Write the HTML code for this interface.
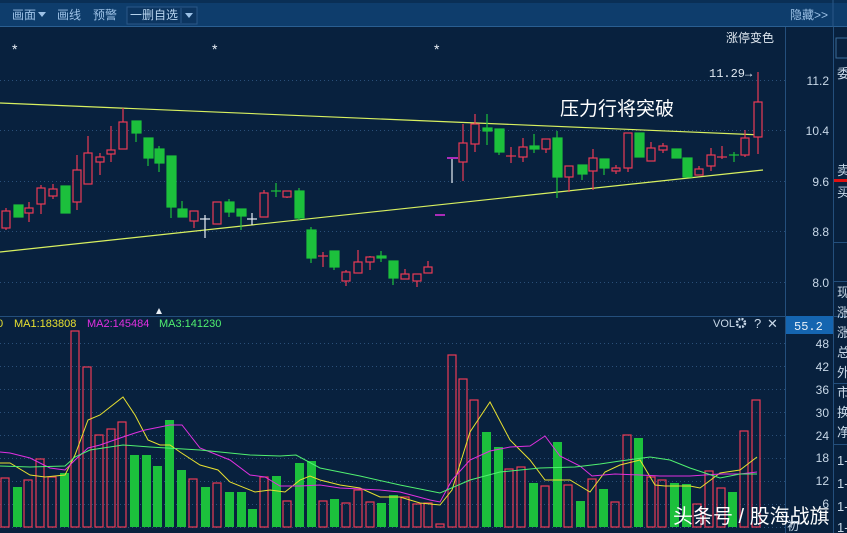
<!DOCTYPE html>
<html><head><meta charset="utf-8"><style>
html,body{margin:0;padding:0;background:#061d38;width:847px;height:533px;overflow:hidden}
svg{display:block}
text{font-family:"Liberation Sans","Noto Sans CJK SC",sans-serif}
text.m{font-family:"Liberation Mono","DejaVu Sans Mono",monospace}
</style></head><body>
<svg width="847" height="533" viewBox="0 0 847 533" xmlns="http://www.w3.org/2000/svg">
<rect width="847" height="533" fill="#08213e"/>
<rect x="0" y="0" width="847" height="27" fill="#0e3d6c"/>
<rect x="0" y="0" width="847" height="3" fill="#0a2f55"/>
<rect x="0" y="26" width="847" height="1" fill="#2a5f92"/>
<g font-size="12" fill="#9cc1e6">
<text x="12" y="19">画面</text><path d="M38 12 l8 0 l-4 5z" fill="#9cc1e6"/>
<text x="57" y="19">画线</text><text x="93" y="19">预警</text>
<rect x="127" y="7" width="70" height="17" fill="#0c3560" stroke="#2a5888"/>
<text x="130" y="19" fill="#b8d4ee">一删自选</text>
<line x1="181" y1="8" x2="181" y2="23" stroke="#2a5888"/>
<path d="M185 13 l8 0 l-4 5z" fill="#9cc1e6"/>
<text x="790" y="19">隐藏&gt;&gt;</text>
</g>
<line x1="833" y1="0" x2="833" y2="27" stroke="#2a5888"/>
<line x1="785.5" y1="27" x2="785.5" y2="533" stroke="#244f7c"/>
<line x1="833.5" y1="27" x2="833.5" y2="533" stroke="#244f7c"/>
<line x1="0" y1="316.5" x2="847" y2="316.5" stroke="#244f7c"/>
<line x1="834" y1="281.5" x2="847" y2="281.5" stroke="#244f7c"/>
<rect x="836" y="38" width="14" height="20" fill="none" stroke="#3a6a98"/>
<rect x="834" y="179" width="13" height="3" fill="#e01010"/>
<g font-size="13" fill="#c8d8e8">
<text x="837" y="78">委</text><text x="837" y="175">卖</text><text x="837" y="197">买</text>
<text x="837" y="297">现</text><text x="837" y="317">涨</text><text x="837" y="337">涨</text><text x="837" y="357">总</text><text x="837" y="377">外</text><text x="837" y="397">市</text><text x="837" y="417">换</text><text x="837" y="437">净</text>
<text x="837" y="465">1-</text><text x="837" y="488">1-</text><text x="837" y="511">1-</text><text x="837" y="532">1-</text>
</g>
<line x1="834" y1="242.5" x2="847" y2="242.5" stroke="#244f7c"/>
<line x1="834" y1="383.5" x2="847" y2="383.5" stroke="#244f7c"/>
<line x1="834" y1="444.5" x2="847" y2="444.5" stroke="#244f7c"/>
<g stroke="#2a4f78" stroke-dasharray="1,3">
<line x1="0" y1="80.5" x2="785" y2="80.5"/><line x1="0" y1="130.5" x2="785" y2="130.5"/><line x1="0" y1="181.5" x2="785" y2="181.5"/><line x1="0" y1="231.5" x2="785" y2="231.5"/><line x1="0" y1="282.5" x2="785" y2="282.5"/>
<line x1="0" y1="343.5" x2="785" y2="343.5"/><line x1="0" y1="366.5" x2="785" y2="366.5"/><line x1="0" y1="389.5" x2="785" y2="389.5"/><line x1="0" y1="412.5" x2="785" y2="412.5"/><line x1="0" y1="435.5" x2="785" y2="435.5"/><line x1="0" y1="458.5" x2="785" y2="458.5"/><line x1="0" y1="481.5" x2="785" y2="481.5"/><line x1="0" y1="504.5" x2="785" y2="504.5"/><line x1="0" y1="527.5" x2="785" y2="527.5"/>
</g>
<g class="m" font-size="12" fill="#c8d8e8" text-anchor="end" font-family="Liberation Mono, monospace">
<text x="829" y="85">11.2</text><text x="829" y="135">10.4</text><text x="829" y="186">9.6</text><text x="829" y="236">8.8</text><text x="829" y="287">8.0</text>
<text x="829" y="348">48</text><text x="829" y="371">42</text><text x="829" y="394">36</text><text x="829" y="417">30</text><text x="829" y="440">24</text><text x="829" y="462">18</text><text x="829" y="485">12</text><text x="829" y="508">6</text>
</g>
<rect x="786" y="316" width="47" height="18" fill="#1565b0"/>
<text class="m" x="794" y="330" font-size="12" fill="#e8f0f8">55.2</text>
<g fill="#e8eef5" font-size="14"><text x="12" y="54">*</text><text x="212" y="54">*</text><text x="434" y="54">*</text></g>
<text x="726" y="42" font-size="12" fill="#e0e8f0">涨停变色</text>
<text class="m" x="709" y="77" font-size="12" fill="#e0e8f0">11.29→</text>
<text x="560" y="115" font-size="19" fill="#ffffff">压力行将突破</text>
<path d="M156 314 l3 -6 l3 6z" fill="#e8eef5"/>
<line x1="0" y1="103" x2="762" y2="135" stroke="#d8f060" stroke-width="1.2"/>
<line x1="0" y1="252" x2="763" y2="170" stroke="#d8f060" stroke-width="1.2"/>
<line x1="435" y1="215" x2="445" y2="215" stroke="#e030e0" stroke-width="1.5"/>
<line x1="447" y1="158" x2="458" y2="158" stroke="#e030e0" stroke-width="1.5"/>
<g stroke="#ea3a55" stroke-width="1.2" fill="#08213e">
<line x1="6" y1="208" x2="6" y2="230"/><rect x="2" y="211" width="8" height="17"/>
<line x1="29" y1="202" x2="29" y2="222"/><rect x="25" y="208" width="8" height="5"/>
<line x1="41" y1="185" x2="41" y2="214"/><rect x="37" y="188" width="8" height="16"/>
<line x1="53" y1="184" x2="53" y2="199"/><rect x="49" y="189" width="8" height="7"/>
<line x1="77" y1="155" x2="77" y2="210"/><rect x="73" y="170" width="8" height="32"/>
<line x1="88" y1="136" x2="88" y2="184"/><rect x="84" y="153" width="8" height="31"/>
<line x1="100" y1="153" x2="100" y2="175"/><rect x="96" y="157" width="8" height="5"/>
<line x1="111" y1="126" x2="111" y2="162"/><rect x="107" y="150" width="8" height="4"/>
<line x1="123" y1="108" x2="123" y2="149"/><rect x="119" y="122" width="8" height="27"/>
<line x1="194" y1="211" x2="194" y2="228"/><rect x="190" y="211" width="8" height="10"/>
<rect x="213" y="202" width="8" height="22"/>
<line x1="264" y1="190" x2="264" y2="217"/><rect x="260" y="193" width="8" height="24"/>
<line x1="287" y1="191" x2="287" y2="198"/><rect x="283" y="191" width="8" height="6"/>
<line x1="323" y1="252" x2="323" y2="267"/><line x1="318" y1="256" x2="328" y2="256"/>
<line x1="346" y1="270" x2="346" y2="286"/><rect x="342" y="272" width="8" height="9"/>
<line x1="358" y1="250" x2="358" y2="273"/><rect x="354" y="262" width="8" height="11"/>
<line x1="370" y1="256" x2="370" y2="270"/><rect x="366" y="257" width="8" height="5"/>
<line x1="405" y1="269" x2="405" y2="279"/><rect x="401" y="274" width="8" height="5"/>
<line x1="417" y1="274" x2="417" y2="287"/><rect x="413" y="274" width="8" height="7"/>
<line x1="428" y1="261" x2="428" y2="273"/><rect x="424" y="267" width="8" height="6"/>
<line x1="463" y1="124" x2="463" y2="181"/><rect x="459" y="143" width="8" height="19"/>
<line x1="475" y1="114" x2="475" y2="152"/><rect x="471" y="124" width="8" height="20"/>
<line x1="511" y1="147" x2="511" y2="163"/><line x1="506" y1="156" x2="516" y2="156"/>
<line x1="523" y1="138" x2="523" y2="162"/><rect x="519" y="147" width="8" height="10"/>
<line x1="546" y1="139" x2="546" y2="153"/><rect x="542" y="139" width="8" height="10"/>
<line x1="569" y1="166" x2="569" y2="192"/><rect x="565" y="166" width="8" height="11"/>
<line x1="593" y1="149" x2="593" y2="190"/><rect x="589" y="158" width="8" height="13"/>
<line x1="616" y1="165" x2="616" y2="174"/><rect x="612" y="168" width="8" height="3"/>
<line x1="628" y1="133" x2="628" y2="172"/><rect x="624" y="133" width="8" height="35"/>
<line x1="651" y1="142" x2="651" y2="161"/><rect x="647" y="148" width="8" height="13"/>
<line x1="663" y1="143" x2="663" y2="153"/><rect x="659" y="146" width="8" height="4"/>
<line x1="699" y1="166" x2="699" y2="175"/><rect x="695" y="169" width="8" height="6"/>
<line x1="711" y1="148" x2="711" y2="171"/><rect x="707" y="155" width="8" height="11"/>
<line x1="722" y1="146" x2="722" y2="159"/><line x1="717" y1="157" x2="727" y2="157"/>
<line x1="745" y1="130" x2="745" y2="157"/><rect x="741" y="138" width="8" height="17"/>
<line x1="758" y1="72" x2="758" y2="154"/><rect x="754" y="102" width="8" height="35"/>
</g>
<g stroke="#1cc03c" stroke-width="1.2" fill="#1cc03c">
<rect x="14" y="205" width="9" height="12"/>
<rect x="61" y="186" width="9" height="27"/>
<line x1="136" y1="121" x2="136" y2="142"/><rect x="132" y="121" width="9" height="12"/>
<line x1="148" y1="138" x2="148" y2="166"/><rect x="144" y="138" width="9" height="20"/>
<line x1="159" y1="146" x2="159" y2="172"/><rect x="155" y="149" width="9" height="14"/>
<line x1="171" y1="156" x2="171" y2="218"/><rect x="167" y="156" width="9" height="51"/>
<line x1="182" y1="201" x2="182" y2="217"/><rect x="178" y="209" width="9" height="8"/>
<line x1="229" y1="199" x2="229" y2="217"/><rect x="225" y="202" width="9" height="10"/>
<line x1="241" y1="209" x2="241" y2="230"/><rect x="237" y="209" width="9" height="7"/>
<line x1="276" y1="183" x2="276" y2="197"/><line x1="271" y1="191" x2="281" y2="191"/>
<line x1="299" y1="188" x2="299" y2="220"/><rect x="295" y="191" width="9" height="27"/>
<line x1="311" y1="227" x2="311" y2="263"/><rect x="307" y="230" width="9" height="28"/>
<line x1="334" y1="251" x2="334" y2="270"/><rect x="330" y="251" width="9" height="16"/>
<line x1="381" y1="251" x2="381" y2="262"/><rect x="377" y="256" width="9" height="2"/>
<line x1="393" y1="261" x2="393" y2="285"/><rect x="389" y="261" width="9" height="17"/>
<line x1="487" y1="114" x2="487" y2="145"/><rect x="483" y="128" width="9" height="3"/>
<line x1="499" y1="129" x2="499" y2="155"/><rect x="495" y="129" width="9" height="23"/>
<line x1="534" y1="134" x2="534" y2="153"/><rect x="530" y="146" width="9" height="3"/>
<line x1="557" y1="131" x2="557" y2="198"/><rect x="553" y="138" width="9" height="39"/>
<line x1="582" y1="165" x2="582" y2="180"/><rect x="578" y="165" width="9" height="9"/>
<line x1="604" y1="159" x2="604" y2="175"/><rect x="600" y="159" width="9" height="9"/>
<rect x="635" y="133" width="9" height="24"/>
<rect x="672" y="149" width="9" height="9"/>
<rect x="683" y="158" width="9" height="19"/>
<line x1="734" y1="152" x2="734" y2="162"/><line x1="729" y1="155" x2="739" y2="155"/>
</g>
<g stroke="#e8eef5" stroke-width="1.2">
<line x1="205" y1="215" x2="205" y2="238"/><line x1="200" y1="219" x2="210" y2="219"/>
<line x1="252" y1="213" x2="252" y2="225"/><line x1="247" y1="219" x2="257" y2="219"/>
<line x1="452" y1="159" x2="452" y2="183"/>
</g>
<g class="m" font-size="11" font-family="Liberation Mono, monospace">
<text x="-3" y="327" fill="#e8e030">0</text>
<text x="14" y="327" fill="#e8e030">MA1:183808</text>
<text x="87" y="327" fill="#e030e0">MA2:145484</text>
<text x="159" y="327" fill="#50f070">MA3:141230</text>
<text x="713" y="327" fill="#c8d8e8">VOL</text>
</g>
<text x="754" y="328" fill="#c8d8e8" font-size="13">?</text>
<text x="767" y="328" fill="#c8d8e8" font-size="13">✕</text>
<circle cx="741" cy="323" r="4" fill="none" stroke="#c8d8e8" stroke-width="2.5" stroke-dasharray="2,1.2"/>
<g stroke="#ea3a55" stroke-width="1.2" fill="none">
<rect x="1" y="478" width="8" height="49"/><rect x="24" y="480" width="8" height="47"/><rect x="36" y="459" width="8" height="68"/><rect x="48" y="477" width="8" height="50"/>
<rect x="71" y="331" width="8" height="196"/><rect x="83" y="367" width="8" height="160"/><rect x="95" y="435" width="8" height="92"/><rect x="107" y="429" width="8" height="98"/><rect x="118" y="422" width="8" height="105"/>
<rect x="189" y="479" width="8" height="48"/><rect x="213" y="483" width="8" height="44"/><rect x="260" y="477" width="8" height="50"/><rect x="283" y="501" width="8" height="26"/><rect x="319" y="501" width="8" height="26"/><rect x="342" y="503" width="8" height="24"/><rect x="354" y="490" width="8" height="37"/><rect x="366" y="502" width="8" height="25"/>
<rect x="401" y="497" width="8" height="30"/><rect x="413" y="504" width="8" height="23"/><rect x="424" y="503" width="8" height="24"/><rect x="436" y="524" width="8" height="3"/>
<rect x="448" y="355" width="8" height="172"/><rect x="459" y="379" width="8" height="148"/><rect x="470" y="400" width="8" height="127"/>
<rect x="505" y="469" width="8" height="58"/><rect x="517" y="467" width="8" height="60"/><rect x="541" y="486" width="8" height="41"/><rect x="564" y="485" width="8" height="42"/><rect x="588" y="479" width="8" height="48"/><rect x="611" y="502" width="8" height="25"/><rect x="623" y="435" width="8" height="92"/><rect x="647" y="477" width="8" height="50"/><rect x="658" y="480" width="8" height="47"/><rect x="693" y="504" width="8" height="23"/><rect x="705" y="471" width="8" height="56"/><rect x="717" y="488" width="8" height="39"/><rect x="740" y="431" width="8" height="96"/><rect x="752" y="400" width="8" height="127"/>
</g>
<g fill="#1cc03c">
<rect x="13" y="487" width="9" height="40"/><rect x="60" y="473" width="9" height="54"/>
<rect x="130" y="455" width="9" height="72"/><rect x="142" y="455" width="9" height="72"/><rect x="153" y="466" width="9" height="61"/><rect x="165" y="420" width="9" height="107"/><rect x="177" y="470" width="9" height="57"/><rect x="201" y="487" width="9" height="40"/><rect x="225" y="492" width="9" height="35"/><rect x="237" y="492" width="9" height="35"/><rect x="248" y="509" width="9" height="18"/><rect x="272" y="476" width="9" height="51"/><rect x="295" y="463" width="9" height="64"/><rect x="307" y="461" width="9" height="66"/><rect x="330" y="499" width="9" height="28"/><rect x="377" y="503" width="9" height="24"/><rect x="389" y="495" width="9" height="32"/>
<rect x="482" y="432" width="9" height="95"/><rect x="494" y="447" width="9" height="80"/><rect x="529" y="483" width="9" height="44"/><rect x="553" y="442" width="9" height="85"/><rect x="576" y="501" width="9" height="26"/><rect x="599" y="489" width="9" height="38"/><rect x="634" y="438" width="9" height="89"/><rect x="670" y="483" width="9" height="44"/><rect x="682" y="484" width="9" height="43"/><rect x="728" y="492" width="9" height="35"/>
</g>
<polyline fill="none" stroke="#e8e030" stroke-width="1" points="0,463 10,463 30,475 45,477 65,475 75,455 88,420 100,415 123,397 135,415 148,440 160,445 170,445 180,452 200,465 218,470 230,482 255,492 270,490 285,492 300,480 310,476 320,480 340,485 360,488 380,497 400,497 420,503 440,505 452,490 470,432 490,402 510,440 530,460 545,480 570,480 590,492 605,472 620,465 640,460 655,485 665,486 690,486 700,488 720,473 740,470 757,457"/>
<polyline fill="none" stroke="#e030e0" stroke-width="1" points="0,452 10,453 30,458 50,468 65,470 75,460 88,448 100,445 123,437 135,433 145,430 170,425 182,425 200,448 230,460 250,475 265,477 280,486 300,486 320,485 340,488 360,489 380,490 400,492 430,500 440,502 452,480 470,460 490,451 510,447 530,446 545,436 560,456 580,466 592,476 615,474 640,475 660,476 690,476 720,474 740,474 757,472"/>
<polyline fill="none" stroke="#50f070" stroke-width="1" points="0,466 30,467 65,466 75,457 90,450 123,445 150,447 200,450 250,455 280,456 296,455 320,468 360,476 400,485 440,493 470,480 500,472 540,468 575,467 600,464 620,461 650,457 670,460 690,468 720,478 740,474 757,474"/>
<text x="673" y="523" font-size="20" fill="#ffffff">头条号 / 股海战旗</text>
<text x="787" y="530" font-size="12" fill="#c8d8e8">初</text>
</svg>
</body></html>
